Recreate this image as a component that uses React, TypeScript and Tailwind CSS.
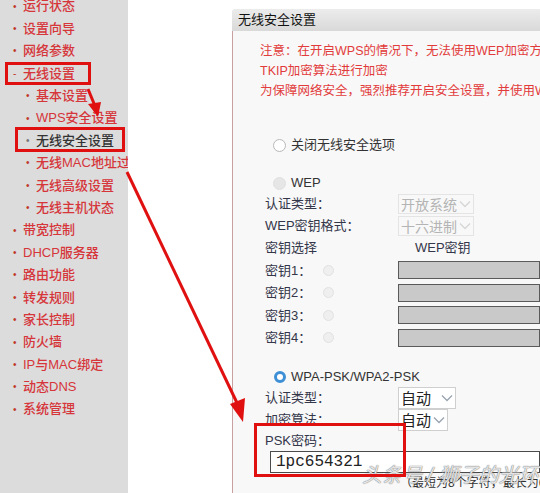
import React from "react";

type NavItem = { label: string; sub?: boolean; mark?: string; active?: boolean };

const navItems: NavItem[] = [
  { label: "运行状态" },
  { label: "设置向导" },
  { label: "网络参数" },
  { label: "无线设置", mark: "-" },
  { label: "基本设置", sub: true },
  { label: "WPS安全设置", sub: true },
  { label: "无线安全设置", sub: true, active: true },
  { label: "无线MAC地址过滤", sub: true },
  { label: "无线高级设置", sub: true },
  { label: "无线主机状态", sub: true },
  { label: "带宽控制" },
  { label: "DHCP服务器" },
  { label: "路由功能" },
  { label: "转发规则" },
  { label: "家长控制" },
  { label: "防火墙" },
  { label: "IP与MAC绑定" },
  { label: "动态DNS" },
  { label: "系统管理" },
];

function Radio({ kind }: { kind: "off" | "disabled" | "on" | "tiny" }) {
  if (kind === "on") {
    return <span className="block h-[12px] w-[12px] rounded-full border-[3px] border-[#3d8fd6] bg-white" />;
  }
  if (kind === "disabled") {
    return <span className="block h-[13px] w-[13px] rounded-full border border-[#e0e0e0] bg-[#e6e6e6]" />;
  }
  if (kind === "tiny") {
    return <span className="block h-[11px] w-[11px] rounded-full border border-[#e2e2e2] bg-[#efefef]" />;
  }
  return <span className="block h-[13px] w-[13px] rounded-full border border-[#b8b8b8] bg-white" />;
}

function Chevron({ light }: { light?: boolean }) {
  return (
    <svg width="12" height="8" viewBox="0 0 12 8" className="shrink-0">
      <path d="M1 1.5 L6 6.5 L11 1.5" fill="none" stroke={light ? "#d6d6d6" : "#9aa4b0"} strokeWidth="1.3" />
    </svg>
  );
}

function Row({ label, children }: { label: string; children?: React.ReactNode }) {
  return (
    <div className="flex h-[22px] items-center">
      <span className="w-[133px] shrink-0 text-[13px] text-[#34364a]">{label}</span>
      {children}
    </div>
  );
}

function Select({ value, width, light }: { value: string; width: string; light?: boolean }) {
  return (
    <div
      className={`flex shrink-0 items-center justify-between gap-[1px] px-[2px] ${width} ${
        light ? "h-[20px] border border-[#e4e4e4] text-[#b4b4b4]" : "h-[22px] border border-[#cfcfcf] bg-white text-[#222]"
      }`}
    >
      <span
        className={`shrink-0 whitespace-nowrap font-['Noto_Sans_CJK_SC',sans-serif] ${
          light ? "text-[14px] leading-[18px]" : "text-[15px] leading-[20px]"
        }`}
      >
        {value}
      </span>
      <Chevron light={light} />
    </div>
  );
}

export default function App() {
  return (
    <div className="relative flex h-[493px] w-[540px] overflow-hidden bg-white font-['Liberation_Sans','Noto_Sans_CJK_SC',sans-serif]">
      {/* sidebar */}
      <div className="h-full w-[128px] shrink-0 overflow-hidden bg-[#dcdcdc]">
        <ul className="mt-[-5px]">
          {navItems.map((item) => (
            <li
              key={item.label}
              className={`flex h-[22.4px] items-center whitespace-nowrap text-[13px] font-medium ${item.sub ? "pl-[26px]" : "pl-[13px]"} ${item.active ? "text-[#333]" : "text-[#d6353a]"}`}
            >
              <span className={`w-[10px] shrink-0 text-[10px] ${item.active ? "text-[#777]" : "text-[#c0392b]"}`}>
                {item.mark ?? "•"}
              </span>
              <span className="shrink-0">{item.label}</span>
            </li>
          ))}
        </ul>
      </div>

      {/* panel */}
      <div className="ml-[104px] flex min-w-0 flex-1 flex-col pt-[9px]">
        <div className="flex h-[24px] items-center rounded-tl-[3px] bg-gradient-to-b from-[#ececec] to-[#d9d9d9] pl-[6px] text-[13px] text-[#111]">
          无线安全设置
        </div>
        <div className="flex-1 border-l border-[#c9a0a0] bg-[#f8f8f8] pl-[32px]">
          <div className="mt-[10px] whitespace-nowrap text-[12.5px] leading-[20px] text-[#e23b3b]">
            <p className="-ml-[5px]">注意：在开启WPS的情况下，无法使用WEP加密方式</p>
            <p className="-ml-[5px]">TKIP加密算法进行加密</p>
            <p className="-ml-[5px]">为保障网络安全，强烈推荐开启安全设置，并使用WPA</p>
          </div>

          <div className="mt-[34px] flex h-[20px] items-center gap-[5px] pl-[8px] text-[13px] text-[#333]">
            <Radio kind="off" />
            <span>关闭无线安全选项</span>
          </div>

          <div className="mt-[18px] flex h-[20px] items-center gap-[5px] pl-[8px] text-[13px] text-[#333]">
            <Radio kind="disabled" />
            <span>WEP</span>
          </div>

          <Row label="认证类型：">
            <Select value="开放系统" width="w-[76px]" light />
          </Row>
          <Row label="WEP密钥格式：">
            <Select value="十六进制" width="w-[76px]" light />
          </Row>
          <Row label="密钥选择">
            <span className="pl-[17px] text-[13px] text-[#34364a]">WEP密钥</span>
          </Row>
          {["密钥1：", "密钥2：", "密钥3：", "密钥4："].map((k) => (
            <div key={k} className="flex h-[22.5px] items-center">
              <span className="w-[58px] shrink-0 text-[13px] text-[#34364a]">{k}</span>
              <span className="w-[75px] shrink-0">
                <Radio kind="tiny" />
              </span>
              <div className="h-[18px] flex-1 border border-[#5a5a5a] bg-[#c9c9c9]" />
            </div>
          ))}

          <div className="mt-[18px] flex h-[20px] items-center gap-[5px] pl-[9px] text-[13px] text-[#333]">
            <Radio kind="on" />
            <span>WPA-PSK/WPA2-PSK</span>
          </div>

          <Row label="认证类型：">
            <Select value="自动" width="w-[58px]" />
          </Row>
          <Row label="加密算法：">
            <Select value="自动" width="w-[50px]" />
          </Row>
          <div className="flex h-[20px] items-center text-[13px] text-[#34364a]">PSK密码：</div>
          <div className="ml-[5px] flex h-[22px] items-center border border-[#4a4a4a] bg-white pl-[5px] font-['Liberation_Mono',monospace] text-[16px] leading-none text-[#222]">
            1pc654321
          </div>
          <div className="flex h-[20px] items-center whitespace-nowrap pl-[135px] text-[12px] text-[#333]">
            （最短为8个字符，最长为64个字符）
          </div>
        </div>
      </div>

      {/* watermark */}
      <div className="absolute left-[362px] top-[460px] whitespace-nowrap text-[20px] italic text-white/80 [text-shadow:0_0_1px_#777,0_0_1px_#777]">
        头条号 / 狮子的光环
      </div>

      {/* annotation boxes */}
      <div className="absolute left-[5px] top-[62px] h-[23px] w-[86px] border-[3px] border-[#e01010]" />
      <div className="absolute left-[15px] top-[127px] h-[25px] w-[110px] border-[3px] border-[#e01010]" />
      <div className="absolute left-[254px] top-[423px] h-[54px] w-[152px] border-[3px] border-[#e01010]" />

      {/* annotation arrows */}
      <svg className="pointer-events-none absolute left-0 top-0" width="540" height="493">
        <line x1="88" y1="89" x2="95" y2="106" stroke="#e01010" strokeWidth="3" />
        <polygon points="88,104 101,102 98,117" fill="#e01010" />
        <line x1="127" y1="172" x2="238" y2="405" stroke="#e01010" strokeWidth="3" />
        <polygon points="230,404 245,398 243,422" fill="#e01010" />
      </svg>
    </div>
  );
}
